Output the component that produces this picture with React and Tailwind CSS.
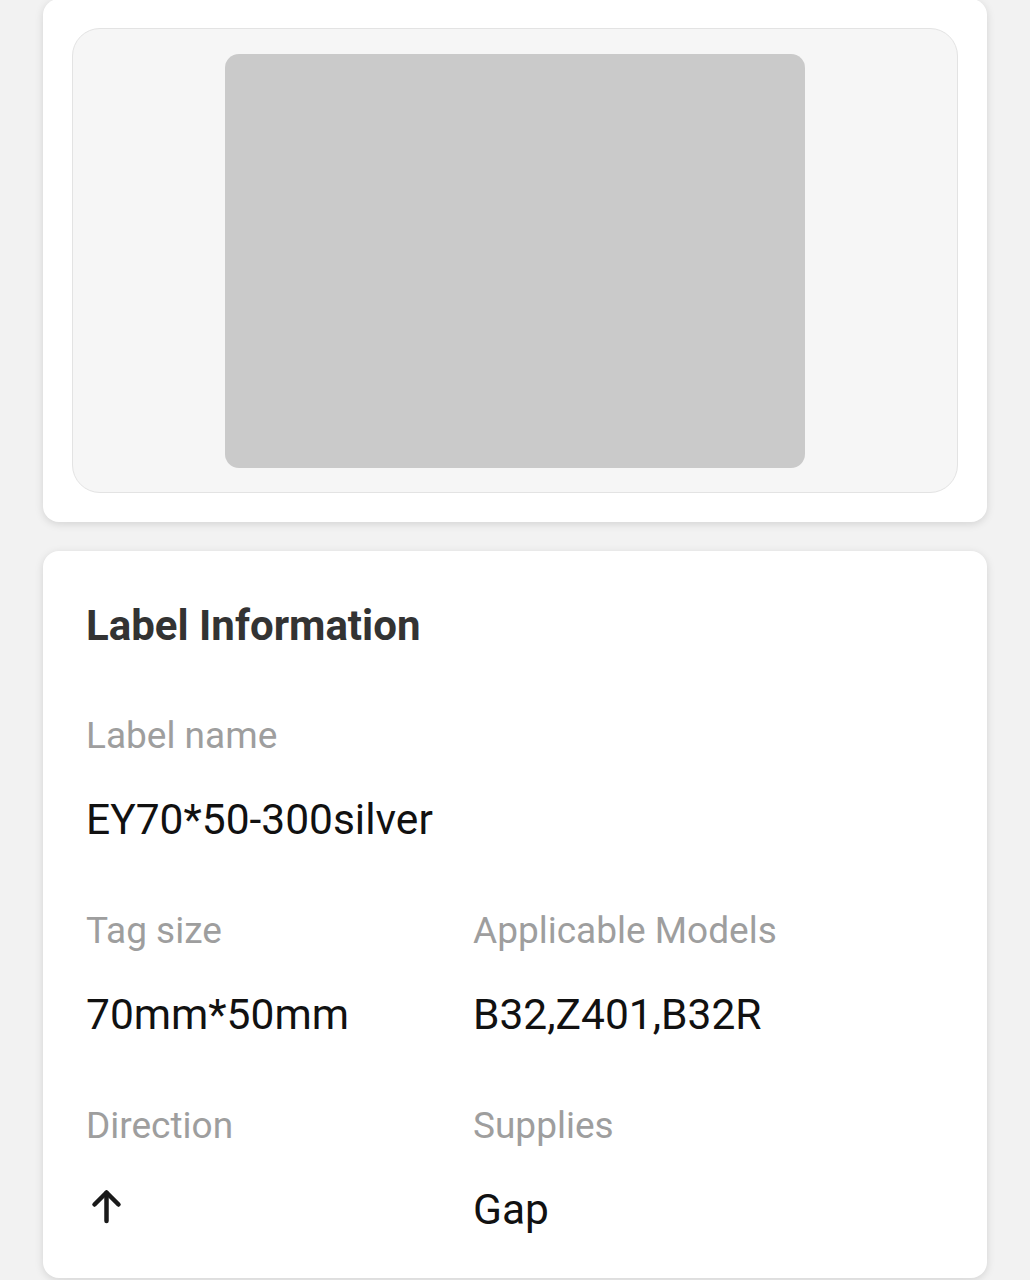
import React from 'react'

const info = [
  { label: 'Tag size', value: '70mm*50mm' },
  { label: 'Applicable Models', value: 'B32,Z401,B32R' },
  { label: 'Direction', value: 'arrow' },
  { label: 'Supplies', value: 'Gap' },
]

function ArrowUp() {
  return (
    <svg width="40" height="50" viewBox="0 0 40 50" fill="none" stroke="#1a1a1a" strokeWidth="4.5" strokeLinecap="round" strokeLinejoin="round">
      <polyline points="8.5,19.5 20.5,7.5 32.5,19.5" />
      <line x1="20.5" y1="8" x2="20.5" y2="36" />
    </svg>
  )
}

function Field({ label, value }) {
  return (
    <div>
      <div className="text-[37px] leading-[44px] text-[#9e9e9e]">{label}</div>
      <div className="mt-[37px] h-[50px] text-[42.5px] leading-[50px] text-[#111111]">
        {value === 'arrow' ? <ArrowUp /> : value}
      </div>
    </div>
  )
}

export default function App() {
  return (
    <div className="h-[1280px] overflow-hidden bg-[#f2f2f2] px-[43px]" style={{ fontFamily: 'Roboto, "Noto Sans", sans-serif' }}>
      {/* preview card */}
      <div className="-mt-px rounded-[16px] bg-white p-[29px] shadow-[0_2px_8px_rgba(0,0,0,0.13)]">
        <div className="flex h-[465px] items-center justify-center rounded-[28px] border border-[#e3e3e3] bg-[#f6f6f6]">
          <div className="h-[414px] w-[580px] rounded-[14px] bg-[#cacaca]" />
        </div>
      </div>

      {/* info card */}
      <div className="mt-[29px] rounded-[16px] bg-white pb-[43px] pl-[43px] pt-[51px] shadow-[0_2px_8px_rgba(0,0,0,0.13)]">
        <h2 className="text-[42px] font-bold leading-[48px] text-[#333333]">Label Information</h2>
        <div className="mt-[64px]">
          <Field label="Label name" value="EY70*50-300silver" />
        </div>
        <div className="mt-[64px] grid grid-cols-[387px_1fr] gap-y-[64px]">
          {info.map(f => (
            <Field key={f.label} label={f.label} value={f.value} />
          ))}
        </div>
      </div>
    </div>
  )
}
